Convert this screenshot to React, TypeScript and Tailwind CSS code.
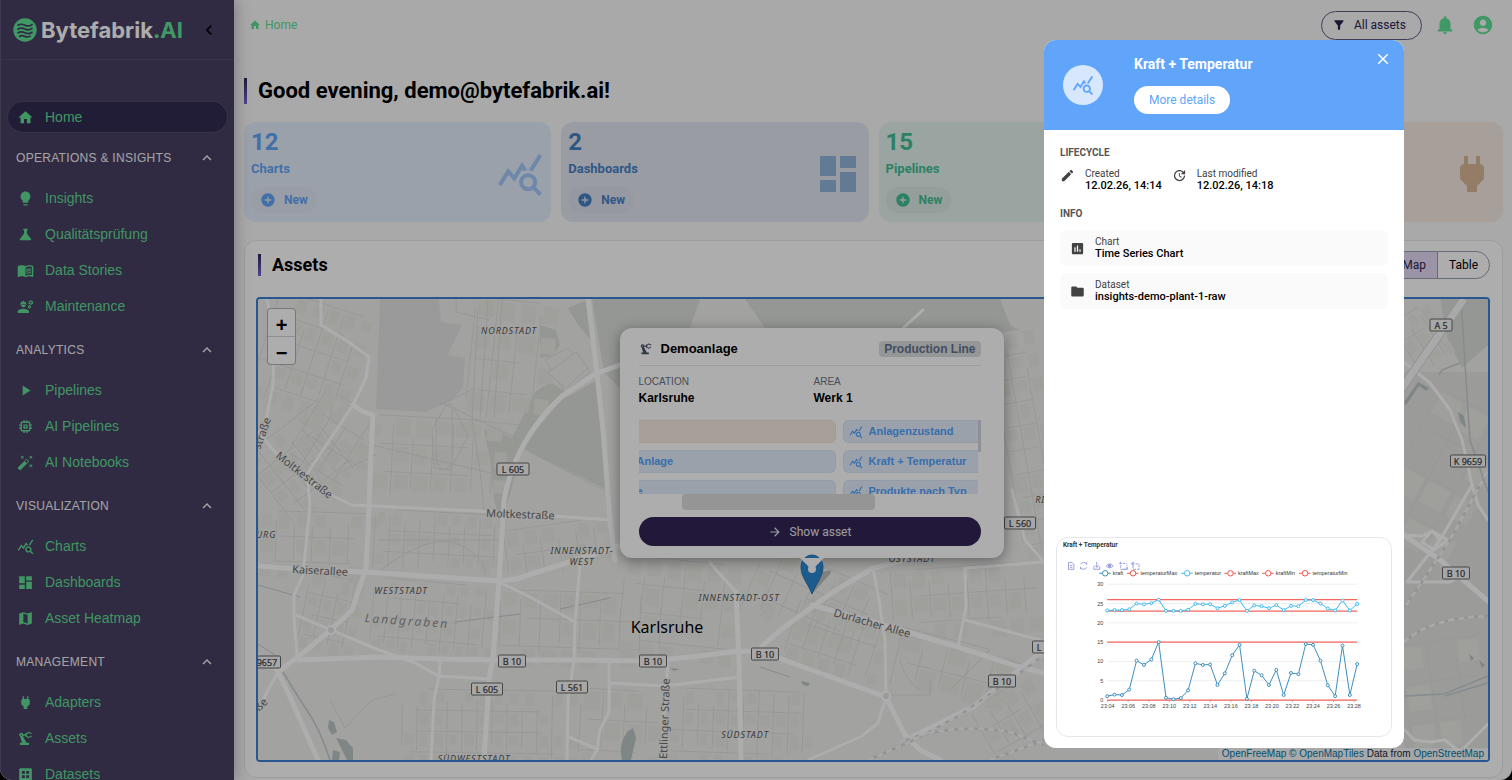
import { useState } from 'react';
import type { IconType } from 'react-icons';
import {
  MdAccountCircle,
  MdAddCircle,
  MdArrowForward,
  MdAutoFixHigh,
  MdChevronLeft,
  MdClose,
  MdDashboard,
  MdDataset,
  MdEdit,
  MdEngineering,
  MdExpandLess,
  MdFilterAlt,
  MdFolder,
  MdHome,
  MdInsertChart,
  MdLightbulb,
  MdMap,
  MdMemory,
  MdMenuBook,
  MdNotifications,
  MdPlayArrow,
  MdPower,
  MdPrecisionManufacturing,
  MdQueryStats,
  MdScience,
  MdUpdate,
} from 'react-icons/md';

interface NavItem {
  label: string;
  icon: IconType;
}

interface NavGroup {
  title: string;
  items: NavItem[];
}

const navGroups: NavGroup[] = [
  {
    title: 'OPERATIONS & INSIGHTS',
    items: [
      { label: 'Insights', icon: MdLightbulb },
      { label: 'Qualitätsprüfung', icon: MdScience },
      { label: 'Data Stories', icon: MdMenuBook },
      { label: 'Maintenance', icon: MdEngineering },
    ],
  },
  {
    title: 'ANALYTICS',
    items: [
      { label: 'Pipelines', icon: MdPlayArrow },
      { label: 'AI Pipelines', icon: MdMemory },
      { label: 'AI Notebooks', icon: MdAutoFixHigh },
    ],
  },
  {
    title: 'VISUALIZATION',
    items: [
      { label: 'Charts', icon: MdQueryStats },
      { label: 'Dashboards', icon: MdDashboard },
      { label: 'Asset Heatmap', icon: MdMap },
    ],
  },
  {
    title: 'MANAGEMENT',
    items: [
      { label: 'Adapters', icon: MdPower },
      { label: 'Assets', icon: MdPrecisionManufacturing },
      { label: 'Datasets', icon: MdDataset },
    ],
  },
];

function Logo() {
  return (
    <div className="flex items-center gap-1">
      <svg className="h-6 w-6" viewBox="0 0 24 24" fill="none">
        <circle cx="12" cy="12" r="11.7" fill="#5fe096" />
        <g stroke="#473f63" strokeWidth="1.7" strokeLinecap="round">
          <path d="M5 7.200c2.500-1.600 4.500-1.200 7 0s4.500 1.300 7-.6" />
          <path d="M5 11c2.500-1.600 4.500-1.200 7 0s4.500 1.300 7-.6" />
          <path d="M5 14.800c2.500-1.600 4.500-1.200 7 0s4.500 1.300 7-.6" />
          <path d="M6.500 18.400c2-1.200 3.500-.8 5.300 0s3.500 1 5.500-.3" />
        </g>
      </svg>
      <span className="font-['Inter'] text-[22px] font-bold leading-6 text-white">
        Bytefabrik<span className="text-[#5fe096]">.AI</span>
      </span>
    </div>
  );
}

function Sidebar() {
  return (
    <aside className="relative z-10 w-[234px] shrink-0 overflow-hidden border-l border-[#5d5675] bg-[#473f63] font-['Liberation_Sans',sans-serif] shadow-[2px_0_14px_rgba(0,0,0,0.25)]">
      <div className="flex h-15 items-center justify-between border-b border-[#544c70] pl-3 pr-[15px]">
        <Logo />
        <button type="button" aria-label="Collapse menu" className="text-black">
          <MdChevronLeft size={20} />
        </button>
      </div>
      <nav className="pt-[42px]">
        <a href="#home" className="mx-[7px] flex h-[30px] items-center gap-[11px] rounded-full bg-[#332c51] pl-[9px] text-sm text-[#5fdc92] ring-1 ring-[#51496e]">
          <MdHome size={17} />
          Home
        </a>
        {navGroups.map((group) => (
          <section key={group.title}>
            <button type="button" className="flex h-12 w-full items-center justify-between pl-[15px] pr-[18px] pt-1 text-xs tracking-wide text-[#f4f2f2]">
              {group.title}
              <MdExpandLess size={18} />
            </button>
            {group.items.map(({ label, icon: Icon }) => (
              <a key={label} href={`#${label}`} className="flex h-9 items-center gap-[11px] pl-4 text-sm text-[#5fdc92]">
                <Icon size={17} />
                {label}
              </a>
            ))}
          </section>
        ))}
      </nav>
    </aside>
  );
}

interface StatCardProps {
  count: number;
  label: string;
  icon: IconType;
  card: string;
  chip: string;
}

const stats: StatCardProps[] = [
  { count: 12, label: 'Charts', icon: MdQueryStats, card: 'bg-[#e4eefc] text-[#60a5fa]', chip: 'bg-[#e1e8f5]' },
  { count: 2, label: 'Dashboards', icon: MdDashboard, card: 'bg-[#e2e8f1] text-[#4681c6]', chip: 'bg-[#dde2ed]' },
  { count: 15, label: 'Pipelines', icon: MdPlayArrow, card: 'bg-[#e4f2ee] text-[#42bf93]', chip: 'bg-[#daebe6]' },
  { count: 4, label: 'Adapters', icon: MdPower, card: 'bg-[#f5ebe4] text-[#c0894f]', chip: 'bg-[#eee3db]' },
];

function StatCard({ count, label, icon: Icon, card, chip }: StatCardProps) {
  return (
    <div className={`flex h-[100px] items-start justify-between rounded-xl pl-[7px] pr-[7px] pt-[6px] ${card}`}>
      <div>
        <div className="text-2xl font-bold leading-7">{count}</div>
        <div className="mt-1 text-[13px] font-bold leading-[18px]">{label}</div>
        <button type="button" className={`mt-[9px] flex h-[26px] items-center gap-2 rounded-full px-[9px] text-xs font-bold ${chip}`}>
          <MdAddCircle size={16} />
          New
        </button>
      </div>
      <Icon size={48} className="mt-[22px] opacity-50" />
    </div>
  );
}

// x, y, width, height, rotation, street spacing
const quarters: number[][] = [
  [262, 302, 95, 110, 18, 17],
  [258, 420, 95, 80, -38, 16],
  [300, 400, 70, 85, 32, 18],
  [372, 418, 130, 82, 3, 20],
  [470, 300, 70, 125, 6, 22],
  [258, 512, 110, 54, 2, 18],
  [374, 512, 125, 62, 3, 15],
  [506, 524, 100, 50, -8, 18],
  [372, 582, 120, 72, 5, 14],
  [304, 576, 48, 70, 12, 15],
  [402, 690, 170, 68, 1, 15],
  [500, 592, 160, 64, 2, 20],
  [580, 690, 80, 66, 3, 22],
  [622, 560, 110, 88, 6, 20],
  [668, 690, 140, 70, 2, 15],
  [748, 565, 130, 78, 24, 19],
  [892, 566, 150, 58, -4, 19],
  [790, 610, 90, 60, 18, 17],
  [895, 640, 110, 58, 14, 24],
  [980, 690, 64, 60, -30, 18],
  [1006, 330, 38, 225, -10, 17],
  [1404, 310, 36, 60, -32, 15],
  [1400, 395, 66, 160, 28, 30],
  [1404, 640, 84, 90, -8, 28],
];

function Quarter({ spec, seed }: { spec: number[]; seed: number }) {
  const [x, y, w, h, angle, step] = spec;
  let state = seed * 7919 + 13;
  const rand = () => {
    state = (state * 16807) % 2147483647;
    return state / 2147483647;
  };
  const streets: string[] = [];
  const houses: number[][] = [];
  for (let sx = 0; sx <= w; sx += step) {
    streets.push(`M${sx} ${(rand() * h * 0.3).toFixed(1)}V${(h - rand() * h * 0.2).toFixed(1)}`);
  }
  for (let sy = 0; sy <= h; sy += step * 1.4) {
    streets.push(`M${(rand() * w * 0.2).toFixed(1)} ${sy.toFixed(1)}H${(w - rand() * w * 0.3).toFixed(1)}`);
    for (let sx = 0; sx < w; sx += step) {
      if (rand() > 0.25) {
        houses.push([sx + 2.5, sy + 3, step - 5 - rand() * 3, step * 0.9 - rand() * 5]);
      }
    }
  }
  return (
    <g transform={`rotate(${angle} ${x + w / 2} ${y + h / 2}) translate(${x} ${y})`}>
      {houses.map(([hx, hy, hw, hh], i) => (
        <rect key={i} x={hx} y={hy} width={hw} height={hh} fill="#eaeae5" />
      ))}
      <path d={streets.join('')} stroke="#e0e0df" strokeWidth="1" fill="none" />
    </g>
  );
}

const mainRoads = [
  'M267 299L274 340L273 385L265 425L258 434',
  'M321 299V325L350 343L369 357L366 378L353 405L335 432L307 474L310 505L306 545L303 575L294 595L294 617L297 656',
  'M258 432L275 452L310 482L335 497L352 505L478 511L612 520',
  'M296 615L331 630L379 650L413 662L439 676L489 679',
  'M440 661L439 676L434 700L431 760',
  'M499 582L532 598L575 622',
  'M580 565L575 622L574 660L568 700L567 760',
  'M609 663V712L600 730L597 750L591 760',
  'M609 683L665 686L740 677',
  'M569 737L597 749',
  'M668 663L666 686L661 760',
  'M873 568L879 600L885 640L886 697L878 723L862 736L808 760',
  'M965 568L966 607L958 647',
  'M965 568L1044 562L1025 540L1012 490',
  'M965 620L1044 641',
  'M710 563L736 592',
  'M258 710L268 690L278 672L258 655',
  'M1405 363L1430 383L1450 410L1462 440L1472 485L1440 540L1407 582L1450 582L1470 570',
  'M1404 535L1422 536L1432 531L1440 540M1422 542L1432 531L1448 540L1434 550Z',
  'M1472 485L1478 505L1488 520',
  'M1405 730L1414 740L1430 742L1445 740L1460 752L1488 724',
  'M923 310L890 340',
];

const wideRoads = [
  'M588 299L597 373L603 430L610 520L615 560',
  'M640 358L620 365L597 373L562 396Q515 440 504 500L499 582L493 657L489 680L484 760',
  'M353 405L364 412L373 415L371 455L368 530L366 568L352 610L331 630L298 657L278 672L290 697L318 760',
  'M258 566L310 570L365 572L499 581L516 579L560 565L622 545',
  'M298 660L380 657L440 659L495 660L580 660L650 661L700 656L738 651L765 652L784 660L886 697L905 735L920 750L940 760',
  'M736 592L739 660L741 760',
  'M905 560L873 568L833 592L812 607L783 628L762 646',
  'M812 605L880 624L958 647L1020 667L1044 673',
  'M1044 650L973 707L910 738',
  'M1404 535L1440 560L1488 601',
];

const roadSigns: [string, number, number, number][] = [
  ['L 605', 513, 469, 32],
  ['L 605', 487, 689, 31],
  ['L 561', 572, 687, 31],
  ['B 10', 512, 661, 27],
  ['B 10', 653, 661, 27],
  ['B 10', 765, 654, 27],
  ['B 10', 1002, 681, 27],
  ['L 560', 1020, 523, 31],
  ['L 623', 1048, 647, 31],
  ['A 5', 1441, 325, 22],
  ['K 9659', 1468, 461, 35],
  ['B 10', 1456, 573, 27],
  ['K 9657', 263, 662, 35],
];

function MapCanvas() {
  return (
    <svg className="block h-full w-full" viewBox="258 299 1230 461" preserveAspectRatio="xMidYMid slice">
      <rect x="258" y="299" width="1230" height="461" fill="#efefed" />
      <path d="M380 299H439L441 322L462 325L448 355L465 358L463 388L450 402L425 412L376 409Z" fill="#e4e4e3" />
      <path d="M592 299H1004L1020 330L880 340L720 400L626 395L604 372ZM597 380L562 400L540 425L522 448L607 490L604 440Z" fill="#dbdfd9" />
      <path d="M535 392L550 382L566 392L545 412L528 434L518 462L510 495L500 520L494 500L490 460L484 430L500 432L512 438Z" fill="#dde1db" />
      <path d="M540 325L556 330L560 345L552 356L540 358ZM568 308L590 299L595 345L578 325Z" fill="#dbdfd9" />
      <path d="M700 299H745L765 328H690ZM1000 299H1044V345L1010 325Z" fill="#efefed" />
      <path d="M1404 372H1488V760H1404Z" fill="#e5e5e3" />
      <path d="M1440 299H1488V345L1462 368L1448 340Z" fill="#dbdfd9" />
      {quarters.map((spec, i) => (
        <Quarter key={i} spec={spec} seed={i + 1} />
      ))}

      <g fill="none" stroke="#dedede" strokeWidth="1">
        <path d="M456 299V312L490 320M478 311L472 420L480 470L484 510M488 300L480 420M502 300L494 418M440 405L475 388" />
        <path d="M432 430L446 405L452 404L468 436L450 470L434 468Z" />
        <path d="M436 418V460Q443 478 452 462V408M372 445L500 475M344 470L376 455M345 728L372 700L395 694M345 728L330 700" />
        <path d="M545 360L568 348L590 372L565 392ZM522 448L607 492M440 402L520 440" />
        <path d="M374 575Q430 530 460 545T484 582M378 540H500" />
        <path d="M900 660Q905 680 920 690M880 695H930V680M950 690L990 650" />
      </g>
      <path d="M548 373L576 352L588 368L566 388Z" fill="#efefec" stroke="#dcdcdb" />

      <g fill="none" stroke="#c3ced0" strokeWidth="1.500">
        <path d="M283 672Q300 700 310 715T330 760" />
        <path d="M258 585L300 597M258 644L275 655M455 622L520 614M560 609L610 598" strokeWidth="1" />
        <path d="M1461 299L1466 380L1470 440L1488 492M1439 375L1442 370L1460 363M1405 696L1444 694L1488 676M1445 696L1488 683" />
        <path d="M760 667L790 677M860 620L1020 664" strokeWidth="1" />
      </g>
      <g fill="#bcc6c6">
        <path d="M329 720L334 722L337 732L332 735L328 728ZM336 738L346 740L353 748L353 760H347L342 750ZM333 750L340 752L339 760H332Z" />
        <path d="M627 732L633 728L636 738L631 760H622Q618 745 627 732Z" />
        <path d="M801 681L810 683L808 686L803 685ZM670 668L680 669L674 671Z" />
        <path d="M1404 402L1418 382L1429 388L1426 391L1419 386L1406 405ZM1458 412L1464 416L1466 428L1460 422ZM1469 654L1474 658L1471 661ZM1479 660L1485 665L1482 668Z" />
      </g>

      <g fill="none" stroke="#fff" strokeWidth="3" strokeLinejoin="round" strokeLinecap="round">
        {mainRoads.map((d) => (
          <path key={d} d={d} />
        ))}
      </g>
      <g fill="none" stroke="#fff" strokeWidth="5" strokeLinejoin="round" strokeLinecap="round">
        {wideRoads.map((d) => (
          <path key={d} d={d} />
        ))}
      </g>
      <path d="M1464 299L1402 388" stroke="#d9d9d9" strokeWidth="9" />
      <path d="M1464 299L1402 388" stroke="#fafafa" strokeWidth="7" />
      <g fill="none" stroke="#d9d9d9" strokeWidth="2.500">
        <path d="M868 760L910 742L960 715L1010 680L1044 655M900 742Q950 722 1010 732L1044 745M990 760L1044 740" />
        <path d="M1487 472L1450 540L1405 607M1404 642Q1430 618 1488 616" />
      </g>
      <g fill="none" stroke="#fafafa" strokeWidth="2.500" strokeDasharray="6 4">
        <path d="M868 760L910 742L960 715L1010 680L1044 655M900 742Q950 722 1010 732L1044 745M990 760L1044 740" />
        <path d="M1487 472L1450 540L1405 607M1404 642Q1430 618 1488 616" />
      </g>
      <circle cx="331" cy="630" r="4" fill="#e4e4e3" stroke="#fff" strokeWidth="2" />
      <circle cx="886" cy="696" r="4" fill="#e4e4e3" stroke="#fff" strokeWidth="2" />

      <g fontFamily="Noto Sans, sans-serif" fontSize="9" fontStyle="italic" fill="#555" textAnchor="middle" letterSpacing="0.900" stroke="#f2f2f0" strokeWidth="1.500" paintOrder="stroke">
        <text x="509" y="334">NORDSTADT</text>
        <text x="401" y="594">WESTSTADT</text>
        <text x="582" y="554">INNENSTADT-</text>
        <text x="582" y="565">WEST</text>
        <text x="739" y="601">INNENSTADT-OST</text>
        <text x="912" y="562">OSTSTADT</text>
        <text x="745" y="738">SÜDSTADT</text>
        <text x="474" y="762">SÜDWESTSTADT</text>
        <text x="263" y="538">BURG</text>
        <text x="1059" y="503">RINTHEIM</text>
      </g>
      <text x="407" y="625" transform="rotate(4 406 620)" fontFamily="Noto Sans, sans-serif" fontSize="12" fontStyle="italic" fill="#909090" textAnchor="middle" letterSpacing="2">Landgraben</text>
      <g fontFamily="Noto Sans, sans-serif" fontSize="11" fill="#6a6a6a" stroke="#f2f2f0" strokeWidth="1.500" paintOrder="stroke">
        <text x="486" y="517" transform="rotate(2 486 517)">Moltkestraße</text>
        <text x="275" y="457" transform="rotate(38 275 457)">Moltkestraße</text>
        <text x="260" y="450" transform="rotate(-70 260 450)">straße</text>
        <text x="292" y="573" transform="rotate(3 292 573)">Kaiserallee</text>
        <text x="833" y="616" transform="rotate(16 833 616)">Durlacher Allee</text>
        <text x="667" y="759" transform="rotate(-88 667 759)">Ettlinger Straße</text>
        <text x="259" y="712" transform="rotate(-45 259 712)">ße</text>
      </g>
      <text x="667" y="633" textAnchor="middle" fontFamily="Noto Sans, sans-serif" fontSize="16" fill="#000" stroke="#f2f2f0" strokeWidth="1.500" paintOrder="stroke">Karlsruhe</text>
      <g fontFamily="Noto Sans, sans-serif" fontSize="9" textAnchor="middle">
        {roadSigns.map(([name, x, y, w], i) => (
          <g key={i}>
            <rect x={x - w / 2} y={y - 6} width={w} height="12" rx="1" fill="#f6f6f6" stroke="#666" />
            <text x={x} y={y + 3.5} fill="#3c3c3c" stroke="#3c3c3c" strokeWidth="0.200">
              {name}
            </text>
          </g>
        ))}
      </g>
    </svg>
  );
}

function Pin() {
  return (
    <svg className="h-10 w-6 overflow-visible" viewBox="0 0 24 40">
      <path d="M12 40L30 20Q34 14 22 18Z" fill="#000" opacity="0.2" />
      <path d="M12 40C9 31 1 23 1 13A11 12 0 0123 13C23 23 15 31 12 40Z" fill="#2a86cf" stroke="#2673b3" />
      <circle cx="12" cy="15" r="4" fill="#fff" />
    </svg>
  );
}

const assetLinks = [
  { left: '', right: 'Anlagenzustand' },
  { left: 'Anlage', right: 'Kraft + Temperatur' },
  { left: 'e', right: 'Produkte nach Typ' },
];

function AssetPopup() {
  return (
    <div className="w-96 rounded-xl bg-white pb-3 pl-[19px] pr-[23px] pt-3 font-['Liberation_Sans',sans-serif] shadow-[0_3px_14px_rgba(0,0,0,0.4)]">
      <div className="flex items-center gap-2 border-b border-gray-200 pb-[7px]">
        <MdPrecisionManufacturing size={14} className="text-gray-600" />
        <h3 className="flex-1 text-[13px] font-bold leading-[18px]">Demoanlage</h3>
        <span className="rounded bg-[#dcdee0] px-[5px] text-xs font-bold leading-4 text-slate-500">Production Line</span>
      </div>
      <dl className="grid grid-cols-2 gap-2 pt-[9px]">
        <div>
          <dt className="text-[10px] leading-[14px] text-gray-500">LOCATION</dt>
          <dd className="text-xs font-bold leading-[18px]">Karlsruhe</dd>
        </div>
        <div>
          <dt className="text-[10px] leading-[14px] text-gray-500">AREA</dt>
          <dd className="text-xs font-bold leading-[18px]">Werk 1</dd>
        </div>
      </dl>
      <div className="mt-[13px] flex h-[74px] overflow-hidden">
        <div className="flex flex-1 flex-col gap-[7px]">
          {assetLinks.map((row, i) => (
            <div key={row.right} className="flex gap-[7px] text-[11px] font-bold text-blue-400">
              <div className={`flex h-[23px] w-[197px] shrink-0 items-center rounded-r-md border border-l-0 ${i === 0 ? 'border-[#f2e2d6] bg-[#f5ebe4]' : 'border-[#d9e5f7] bg-[#e4eefc]'}`}>
                <span className="-ml-[2px]">{row.left}</span>
              </div>
              <a href="#chart" className="flex h-[23px] flex-1 items-center gap-[6px] whitespace-nowrap rounded-l-md border border-r-0 border-[#d9e5f7] bg-[#e4eefc] pl-[5px]">
                <MdQueryStats size={14} />
                {row.right}
              </a>
            </div>
          ))}
        </div>
        <div className="h-8 w-[3px] bg-gray-300" />
      </div>
      <div className="ml-[43px] h-4 w-[193px] rounded bg-[#dcdcdc]" />
      <button type="button" className="mt-[7px] flex h-[29px] w-full items-center justify-center gap-2 rounded-full bg-[#332656] font-['Roboto'] text-xs text-gray-200">
        <MdArrowForward size={14} />
        Show asset
      </button>
    </div>
  );
}

function AssetMap() {
  return (
    <div className="relative h-[465px] overflow-hidden rounded border-2 border-[#3a7fd5] bg-[#f0f0ee]">
      <div className="absolute inset-0">
        <MapCanvas />
      </div>
      <div className="absolute left-[9px] top-[9px] flex flex-col rounded border border-black/30 bg-white font-['Liberation_Sans'] text-xl font-bold text-black">
        <button type="button" aria-label="Zoom in" className="flex h-7 w-[27px] items-center justify-center border-b border-gray-300 pt-1">+</button>
        <button type="button" aria-label="Zoom out" className="flex h-[27px] w-[27px] items-center justify-center pt-1">−</button>
      </div>
      <div className="absolute left-[45%] top-[29px] flex -translate-x-1/2 flex-col items-center">
        <AssetPopup />
        <svg className="relative z-10 h-3 w-6" viewBox="0 0 24 12">
          <path d="M0 0H24L12 12Z" fill="#fff" />
        </svg>
        <div className="-mt-4">
          <Pin />
        </div>
      </div>
      <div className="absolute bottom-0 right-0 bg-white/70 px-1 font-['Liberation_Sans',sans-serif] text-[10px] leading-3 text-gray-800">
        <a href="#openfreemap" className="text-[#0078a8]">OpenFreeMap</a>{' '}
        <a href="#openmaptiles" className="text-[#0078a8]">© OpenMapTiles</a> Data from{' '}
        <a href="#osm" className="text-[#0078a8]">OpenStreetMap</a>
      </div>
    </div>
  );
}

const kraft = [
  1, 1.4, 1.3, 2.7, 10.2, 9.1, 10.5, 15, 0.6, 0.2, 0.5, 2.5, 9.5, 9.1, 9.2, 3.9, 6.9, 11.6, 14.3, 0.3, 7.6, 6.4, 3.9, 7.8, 1.3, 7, 6.7, 14.5, 14.3, 10.2, 3.8, 1, 14.1, 1.3, 9.3,
];
const temperatur = [
  23.2, 23.3, 23.3, 23.5, 25, 24.8, 25.1, 26, 23.1, 23.1, 23.1, 23.4, 24.9, 24.8, 24.8, 23.8, 24.4, 25.3, 25.9, 23.1, 24.5, 24.3, 23.8, 24.6, 23.3, 24.4, 24.3, 25.9, 25.9, 25, 23.7, 23.2, 25.8, 23.2, 24.9,
];
const ticks = ['23:04', '23:06', '23:08', '23:10', '23:12', '23:14', '23:16', '23:18', '23:20', '23:22', '23:24', '23:26', '23:28'];
const legend: [string, string, number][] = [
  ['kraft', '#3b8dbd', 98],
  ['temperaturMax', '#f0544c', 154],
  ['temperatur', '#3fb8ee', 263],
  ['kraftMax', '#f0544c', 350],
  ['kraftMin', '#f0544c', 426],
  ['temperaturMin', '#f0544c', 500],
];

const xAt = (i: number) => 102 + (i * 503) / 34;
const yAt = (v: number) => 326 - (v * 233) / 30;

function Series({ values, color }: { values: number[]; color: string }) {
  return (
    <g stroke={color} strokeWidth="2">
      <polyline points={values.map((v, i) => `${xAt(i)},${yAt(v)}`).join(' ')} fill="none" />
      {values.map((v, i) => (
        <circle key={i} cx={xAt(i)} cy={yAt(v)} r="3" fill="#fff" strokeWidth="2" />
      ))}
    </g>
  );
}

function TimeSeriesChart() {
  return (
    <svg className="block w-full" viewBox="1 0 672 398" fontFamily="Liberation Sans, sans-serif">
      <text x="13" y="19" fontFamily="Roboto, sans-serif" fontSize="13" fontWeight="700" fill="#333">
        Kraft + Temperatur
      </text>
      <g fill="none" stroke="#8f98d8" strokeWidth="1.800">
        <path d="M24 49H31L35 53V63H24ZM27 55H32M27 59H32" />
        <path d="M48.500 53A6.500 6.500 0 0160.500 53M60.500 59A6.500 6.500 0 0148.500 59M60.500 49V54M48.500 63V58" />
        <path d="M75 57V63H87V57M81 48V59M77 55L81 59L85 55" />
        <path d="M100 56Q107 48 114 56Q107 64 100 56Z" />
        <circle cx="107" cy="56" r="2.500" fill="#8f98d8" />
        <path d="M126 51H142M129 48V63H142V54M133 63H142M142 59V66" strokeDasharray="5 2" />
        <path d="M151 52H166V63H154V48M151 52L155 48M151 52L155 56" strokeDasharray="6 2" />
      </g>
      {legend.map(([name, color, x]) => (
        <g key={name}>
          <path d={`M${x - 12} 71H${x + 11}`} stroke={color} strokeWidth="2" />
          <circle cx={x} cy="71" r="5.500" fill="#fff" stroke={color} strokeWidth="2" />
          <text x={x + 15} y="75" fontSize="11" fill="#333">
            {name}
          </text>
        </g>
      ))}
      {[0, 5, 10, 15, 20, 25, 30].map((v) => (
        <g key={v}>
          <path d={`M102 ${yAt(v)}H605`} stroke="#e6e8ee" strokeWidth="1.500" />
          <text x="94" y={yAt(v) + 4} fontSize="11" fill="#444" textAnchor="end">
            {v}
          </text>
        </g>
      ))}
      {ticks.map((t, i) => (
        <g key={t}>
          <path d={`M${103 + i * 41.3} 326v4`} stroke="#6e7079" />
          <text x={103 + i * 41.3} y="342" fontSize="11" fill="#444" textAnchor="middle">
            {t}
          </text>
        </g>
      ))}
      {[0, 15, 23, 26].map((v) => (
        <path key={v} d={`M102 ${yAt(v)}H605`} stroke="#f5665f" strokeWidth="2.500" />
      ))}
      <Series values={temperatur} color="#3fb8ee" />
      <Series values={kraft} color="#3b8dbd" />
    </svg>
  );
}

interface FactProps {
  icon: IconType;
  label: string;
  value: string;
  centered?: boolean;
}

function Fact({ icon: Icon, label, value, centered }: FactProps) {
  return (
    <div className={`flex gap-[10px] ${centered ? 'items-center' : 'items-start'}`}>
      <Icon size={15} className="text-[#424242]" />
      <div className="leading-3">
        <div className="text-[10px] text-[#424242]">{label}</div>
        <div className="text-[11px] font-medium text-black">{value}</div>
      </div>
    </div>
  );
}

function ChartDialog({ onClose }: { onClose: () => void }) {
  return (
    <div role="dialog" aria-label="Kraft + Temperatur" className="absolute bottom-8 right-[108px] top-10 z-30 flex w-[360px] flex-col overflow-hidden rounded-xl bg-white">
      <header className="flex h-[90px] shrink-0 items-start bg-[#60a5fa] pl-[19px] pr-3 text-white">
        <div className="mt-[25px] flex h-10 w-10 items-center justify-center rounded-full bg-white/75 text-[#60a5fa]">
          <MdQueryStats size={22} />
        </div>
        <div className="ml-[31px] flex-1 pt-[14px]">
          <h2 className="text-sm font-bold leading-5">Kraft + Temperatur</h2>
          <button type="button" className="mt-3 h-7 rounded-full bg-white px-[15px] text-xs text-[#60a5fa]">
            More details
          </button>
        </div>
        <button type="button" aria-label="Close" onClick={onClose} className="mt-[10px]">
          <MdClose size={18} />
        </button>
      </header>
      <div className="flex flex-1 flex-col px-4 pt-[17px]">
        <h3 className="text-[10px] font-bold leading-3 text-[#555]">LIFECYCLE</h3>
        <div className="mt-[9px] flex gap-[10px]">
          <Fact icon={MdEdit} label="Created" value="12.02.26, 14:14" />
          <Fact icon={MdUpdate} label="Last modified" value="12.02.26, 14:18" />
        </div>
        <h3 className="mt-4 text-[10px] font-bold leading-3 text-[#555]">INFO</h3>
        <div className="mt-[10px] flex flex-col gap-[7px]">
          <div className="rounded-md bg-[#fafafa] px-[10px] py-[6px]">
            <Fact icon={MdInsertChart} label="Chart" value="Time Series Chart" centered />
          </div>
          <div className="rounded-md bg-[#fafafa] px-[10px] py-[6px]">
            <Fact icon={MdFolder} label="Dataset" value="insights-demo-plant-1-raw" centered />
          </div>
        </div>
        <div className="-mx-1 mb-[11px] mt-auto overflow-hidden rounded-xl border border-gray-200">
          <TimeSeriesChart />
        </div>
      </div>
    </div>
  );
}

export default function App() {
  const [open, setOpen] = useState(true);

  return (
    <div className="h-screen bg-black">
      <div className="relative flex h-full overflow-hidden rounded-b-xl bg-[#f9f9f9] font-['Roboto',sans-serif] text-black">
        <Sidebar />
        <main className="min-w-0 flex-1 pl-[10px] pr-[9px]">
          <header className="flex h-[50px] items-center justify-between pl-[5px] pr-[9px]">
            <a href="#home" className="flex items-center gap-1 text-xs text-[#5fdc92]">
              <MdHome size={12} />
              Home
            </a>
            <div className="flex items-center text-[#5fe096]">
              <button type="button" className="mr-3 flex h-[29px] items-center gap-2 rounded-full border border-[#625b7e] pl-[10px] pr-[15px] text-xs text-[#2b2350]">
                <MdFilterAlt size={14} />
                All assets
              </button>
              <button type="button" aria-label="Notifications" className="mr-4">
                <MdNotifications size={22} />
              </button>
              <button type="button" aria-label="Account">
                <MdAccountCircle size={22} />
              </button>
            </div>
          </header>

          <div className="mt-7 flex h-[26px] items-center gap-[11px]">
            <div className="h-full w-[3px] bg-linear-to-b from-[#32285a] to-[#7a62d0]" />
            <h1 className="text-[22px] font-bold leading-[26px]">Good evening, demo@bytefabrik.ai!</h1>
          </div>

          <div className="mt-[18px] grid grid-cols-4 gap-[10px]">
            {stats.map((s) => (
              <StatCard key={s.label} {...s} />
            ))}
          </div>

          <section className="mt-[18px] rounded-xl border border-gray-200 bg-white pb-[15px] pl-[11px] pr-3 pt-[10px]">
            <div className="mb-[18px] flex h-7 items-center justify-between">
              <div className="flex h-[22px] items-center gap-[11px] pl-[2px]">
                <div className="h-full w-[3px] bg-linear-to-b from-[#32285a] to-[#7a62d0]" />
                <h2 className="text-lg font-bold leading-[22px]">Assets</h2>
              </div>
              <div className="flex h-7 overflow-hidden rounded-full border border-gray-400 text-xs">
                <button type="button" className="border-r border-gray-400 bg-[#e4daf5] px-[11px] text-[#2b2350]">Map</button>
                <button type="button" className="px-[11px]">Table</button>
              </div>
            </div>
            <AssetMap />
          </section>
        </main>

        {open && (
          <>
            <div className="absolute inset-0 z-20 bg-black/32" onClick={() => setOpen(false)} />
            <ChartDialog onClose={() => setOpen(false)} />
          </>
        )}
      </div>
    </div>
  );
}
